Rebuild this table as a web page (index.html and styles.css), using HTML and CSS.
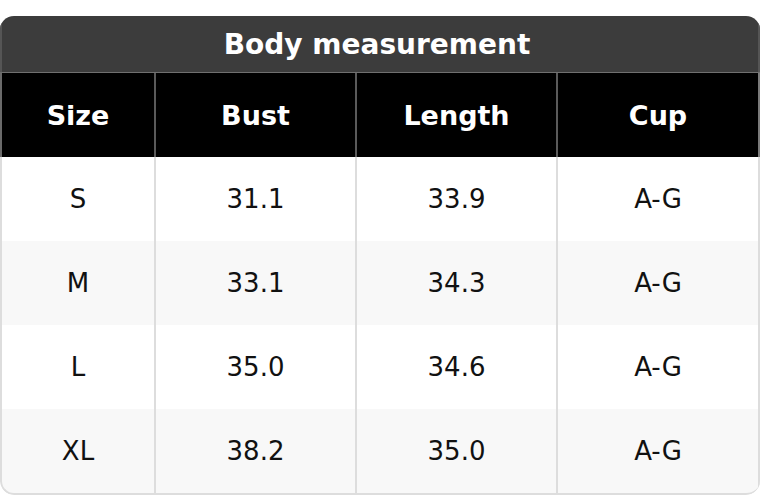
FILE: index.html
```html
<!DOCTYPE html>
<html>
<head>
<meta charset="utf-8">
<link rel="stylesheet" href="styles.css">
</head>
<body>
<div class="card">
  <div class="title">Body measurement</div>
  <div class="row head">
    <div class="cell">Size</div>
    <div class="cell">Bust</div>
    <div class="cell">Length</div>
    <div class="cell">Cup</div>
  </div>
  <div class="row body">
    <div class="cell">S</div>
    <div class="cell">31.1</div>
    <div class="cell">33.9</div>
    <div class="cell">A-G</div>
  </div>
  <div class="row body alt">
    <div class="cell">M</div>
    <div class="cell">33.1</div>
    <div class="cell">34.3</div>
    <div class="cell">A-G</div>
  </div>
  <div class="row body">
    <div class="cell">L</div>
    <div class="cell">35.0</div>
    <div class="cell">34.6</div>
    <div class="cell">A-G</div>
  </div>
  <div class="row body alt last">
    <div class="cell">XL</div>
    <div class="cell">38.2</div>
    <div class="cell">35.0</div>
    <div class="cell">A-G</div>
  </div>
</div>
</body>
</html>
```
FILE: styles.css
```css
html, body {
  margin: 0;
  padding: 0;
  background: #ffffff;
}
body {
  padding-top: 16px;
  font-family: "DejaVu Sans", sans-serif;
}
.card {
  width: 760px;
  border-radius: 14px;
  overflow: hidden;
  box-sizing: border-box;
}
.title {
  height: 56px;
  background: #3c3c3c;
  color: #ffffff;
  font-weight: bold;
  font-size: 28px;
  display: flex;
  align-items: center;
  justify-content: center;
  padding-right: 6px;
  border-left: 2px solid #555555;
  border-right: 2px solid #555555;
}
.row {
  display: grid;
  grid-template-columns: 154px 201px 201px 1fr;
  box-sizing: border-box;
}
.cell {
  display: flex;
  align-items: center;
  justify-content: center;
}
.head {
  height: 85px;
  background: #000000;
  color: #ffffff;
  font-weight: bold;
  font-size: 27px;
  border-top: 1px solid #707070;
  border-left: 2px solid #6a6a6a;
}
.head .cell {
  border-right: 2px solid #5a5a5a;
}
.head .cell:last-child {
  border-right-color: #7a7a7a;
}
.body {
  height: 84px;
  background: #ffffff;
  color: #111111;
  font-size: 26px;
  border-left: 2px solid #dddddd;
}
.body .cell {
  border-right: 2px solid #dddddd;
}
.alt {
  background: #f8f8f8;
}
.last {
  height: 86px;
  border-bottom: 2px solid #dddddd;
  border-radius: 0 0 14px 14px;
}
```
